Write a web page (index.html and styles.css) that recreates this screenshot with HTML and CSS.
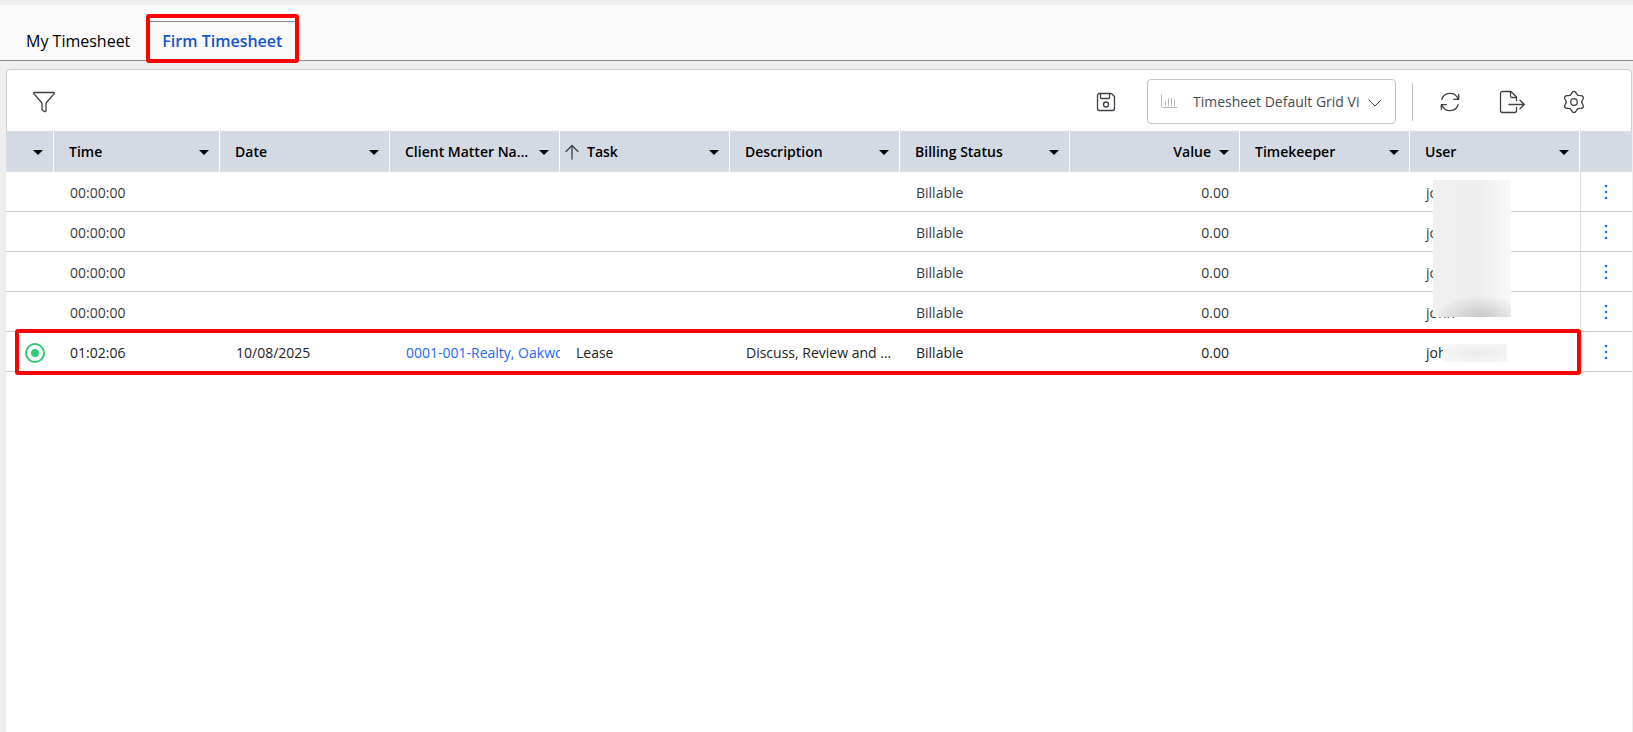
FILE: index.html
```html
<!DOCTYPE html>
<html lang="en">
<head>
    <meta charset="UTF-8">
    <meta name="viewport" content="width=device-width, initial-scale=1.0">
    <title>Firm Timesheet</title>
    <link rel="stylesheet" href="styles.css">
</head>
<body>
    <nav class="tabs">
        <a class="tab" href="#my">My Timesheet</a>
        <a class="tab active" href="#firm">Firm Timesheet</a>
    </nav>

    <main class="panel">
        <div class="toolbar">
            <button class="icon-btn" aria-label="Filter">
                <svg width="24" height="24" viewBox="0 0 24 24"><path d="M2.200 2.500h19.600c.5 0 .6.9.2 1.400L14.500 12.500c-.4.5-.5.8-.5 1.400V20.500c0 1-.9 1.400-1.700.9l-1.700-1.200c-.4-.3-.6-.6-.6-1.100v-5.200c0-.6-.1-.9-.5-1.400L2 3.900c-.4-.5-.3-1.400.2-1.400z"/></svg>
            </button>
            <button class="icon-btn save" aria-label="Save view">
                <svg width="24" height="24" viewBox="0 0 24 24"><path d="M5.500 3.500h11.200c.5 0 .9.200 1.300.5l2 2c.3.4.5.8.5 1.300v11.200a2 2 0 0 1-2 2h-13a2 2 0 0 1-2-2v-13a2 2 0 0 1 2-2zM6.500 3.500v4c0 .6.4 1 1 1h7c.6 0 1-.4 1-1v-4"/><circle cx="12" cy="14.500" r="2.500"/></svg>
            </button>
            <div class="view-select">
                <svg class="chart" width="18" height="16" viewBox="0 0 18 16"><path d="M1.500 1v11.500c0 .6.400 1 1 1H17M5.500 8v3.500M8.500 5v6.500M11.500 4v7.500M14.500 6v5.500"/></svg>
                <select aria-label="Grid view">
                    <option>Timesheet Default Grid View</option>
                </select>
                <svg class="chevron" width="14" height="8" viewBox="0 0 14 8"><path d="M1 1l6 6 6-6"/></svg>
            </div>
            <div class="actions">
                <button class="icon-btn" aria-label="Refresh">
                    <svg width="24" height="24" viewBox="0 0 24 24"><path d="M3.800 9.500A8.600 8.600 0 0 1 20 8.800M20.200 14.500A8.600 8.600 0 0 1 4 15.200M20.700 4.500v4.800h-5M3.300 19.500v-4.800h5"/></svg>
                </button>
                <button class="icon-btn" aria-label="Export">
                    <svg width="26" height="24" viewBox="0 0 26 24"><path d="M17.500 10.500V7L12 1.500H3.500a2 2 0 0 0-2 2v17a2 2 0 0 0 2 2h12a2 2 0 0 0 2-2v-3M11.500 1.500v4.500c0 .8.700 1.500 1.500 1.500h4.500M10 14.500h15M21 10.200l4.300 4.300-4.300 4.300"/></svg>
                </button>
                <button class="icon-btn" aria-label="Settings">
                    <svg width="24" height="24" viewBox="0 0 24 24">
                        <circle cx="12" cy="12" r="3.300"/>
                        <path id="tooth" d="M8.100 5.250C9.800 4.300 9.700 1.400 12 1.400S14.200 4.300 15.900 5.250"/>
                        <use href="#tooth" transform="rotate(60 12 12)"/>
                        <use href="#tooth" transform="rotate(120 12 12)"/>
                        <use href="#tooth" transform="rotate(180 12 12)"/>
                        <use href="#tooth" transform="rotate(240 12 12)"/>
                        <use href="#tooth" transform="rotate(300 12 12)"/>
                    </svg>
                </button>
            </div>
        </div>

        <table class="grid">
            <colgroup>
                <col class="col-state">
                <col class="col-time">
                <col span="8" class="col-data">
                <col class="col-menu">
            </colgroup>
            <thead>
                <tr>
                    <th><div class="head"><button class="caret" aria-label="Status menu"></button></div></th>
                    <th><div class="head"><span>Time</span><button class="caret" aria-label="Time menu"></button></div></th>
                    <th><div class="head"><span>Date</span><button class="caret" aria-label="Date menu"></button></div></th>
                    <th><div class="head"><span>Client Matter Name</span><button class="caret" aria-label="Client matter menu"></button></div></th>
                    <th>
                        <div class="head sorted">
                            <svg width="14" height="16" viewBox="0 0 14 16"><path d="M7 15V1.500M1 7.500l6-6 6 6"/></svg>
                            <span>Task</span><button class="caret" aria-label="Task menu"></button>
                        </div>
                    </th>
                    <th><div class="head"><span>Description</span><button class="caret" aria-label="Description menu"></button></div></th>
                    <th><div class="head"><span>Billing Status</span><button class="caret" aria-label="Billing status menu"></button></div></th>
                    <th><div class="head number"><span>Value</span><button class="caret" aria-label="Value menu"></button></div></th>
                    <th><div class="head"><span>Timekeeper</span><button class="caret" aria-label="Timekeeper menu"></button></div></th>
                    <th><div class="head"><span>User</span><button class="caret" aria-label="User menu"></button></div></th>
                    <th></th>
                </tr>
            </thead>
            <tbody>
                <tr>
                    <td></td><td>00:00:00</td><td></td><td></td><td></td><td></td>
                    <td>Billable</td><td class="number">0.00</td><td></td>
                    <td class="user">john<span class="mask tall"></span></td>
                    <td class="menu"><button class="dots" aria-label="Row menu"><svg width="4" height="16" viewBox="0 0 4 16"><circle cx="2" cy="2" r="1.300"/><circle cx="2" cy="8" r="1.300"/><circle cx="2" cy="14" r="1.300"/></svg></button></td>
                </tr>
                <tr>
                    <td></td><td>00:00:00</td><td></td><td></td><td></td><td></td>
                    <td>Billable</td><td class="number">0.00</td><td></td>
                    <td>john</td>
                    <td class="menu"><button class="dots" aria-label="Row menu"><svg width="4" height="16" viewBox="0 0 4 16"><circle cx="2" cy="2" r="1.300"/><circle cx="2" cy="8" r="1.300"/><circle cx="2" cy="14" r="1.300"/></svg></button></td>
                </tr>
                <tr>
                    <td></td><td>00:00:00</td><td></td><td></td><td></td><td></td>
                    <td>Billable</td><td class="number">0.00</td><td></td>
                    <td>john</td>
                    <td class="menu"><button class="dots" aria-label="Row menu"><svg width="4" height="16" viewBox="0 0 4 16"><circle cx="2" cy="2" r="1.300"/><circle cx="2" cy="8" r="1.300"/><circle cx="2" cy="14" r="1.300"/></svg></button></td>
                </tr>
                <tr>
                    <td></td><td>00:00:00</td><td></td><td></td><td></td><td></td>
                    <td>Billable</td><td class="number">0.00</td><td></td>
                    <td>john</td>
                    <td class="menu"><button class="dots" aria-label="Row menu"><svg width="4" height="16" viewBox="0 0 4 16"><circle cx="2" cy="2" r="1.300"/><circle cx="2" cy="8" r="1.300"/><circle cx="2" cy="14" r="1.300"/></svg></button></td>
                </tr>
                <tr class="running">
                    <td class="state"><svg width="20" height="20" viewBox="0 0 20 20"><circle class="ring" cx="10" cy="10" r="9"/><circle class="dot" cx="10" cy="10" r="4"/></svg></td>
                    <td>01:02:06</td><td>10/08/2025</td>
                    <td class="matter"><a href="#matter">0001-001-Realty, Oakwood</a></td>
                    <td>Lease</td>
                    <td class="description">Discuss, Review and Edit</td>
                    <td>Billable</td><td class="number">0.00</td><td></td>
                    <td class="user">john<span class="mask"></span></td>
                    <td class="menu"><button class="dots" aria-label="Row menu"><svg width="4" height="16" viewBox="0 0 4 16"><circle cx="2" cy="2" r="1.300"/><circle cx="2" cy="8" r="1.300"/><circle cx="2" cy="14" r="1.300"/></svg></button></td>
                </tr>
            </tbody>
        </table>
    </main>
</body>
</html>
```

FILE: styles.css
```css
* {
    box-sizing: border-box;
}

body {
    margin: 0;
    min-height: 100vh;
    display: flex;
    flex-direction: column;
    background: #eeeeee;
    color: #3a3a3a;
    font-family: "Open Sans", "Noto Sans", sans-serif;
    font-size: 14px;
    line-height: 20px;
}

button {
    padding: 0;
    border: none;
    background: none;
    cursor: pointer;
}

svg {
    display: block;
    fill: none;
    stroke: #3f3f46;
    stroke-width: 1.3;
    stroke-linecap: round;
    stroke-linejoin: round;
}

/* tabs */
.tabs {
    display: flex;
    margin-top: 5px;
    padding: 16px 10px 0;
    background: #fafafa;
    border-bottom: 1px solid #8c8c8c;
}

.tab {
    position: relative;
    padding: 9px 16px;
    border-top: 1px solid transparent;
    color: #000000;
    font-size: 16px;
    text-decoration: none;
}

.tab.active {
    border-top-color: #8c8c8c;
    color: #1554c7;
    font-weight: 600;
}

.tab.active::after {
    content: "";
    position: absolute;
    inset: -8px -1px -3px 0;
    border: 4px solid #ff0000;
    border-radius: 3px;
}

/* toolbar */
.panel {
    flex: 1;
    margin: 8px 1px 0 6px;
    background: #ffffff;
    border-radius: 5px 5px 0 0;
}

.toolbar {
    display: flex;
    align-items: center;
    height: 62px;
    padding: 2px 44px 0 24px;
    border: 1px solid #cccccc;
    border-bottom: none;
    border-radius: 5px 5px 0 0;
}

.icon-btn {
    display: flex;
    justify-content: center;
    width: 26px;
}

.save {
    margin-left: auto;
}

.view-select {
    position: relative;
    width: 249px;
    margin-left: 28px;
}

.view-select select {
    display: block;
    width: 100%;
    height: 45px;
    padding: 0 35px 0 45px;
    appearance: none;
    border: 1px solid #c4c4c4;
    border-radius: 4px;
    background: #ffffff;
    color: #4a4a4a;
    font: inherit;
}

.view-select svg {
    position: absolute;
    pointer-events: none;
}

.chart {
    top: 15px;
    left: 13px;
    stroke: #b8b8b8;
    stroke-width: 1;
}

.chevron {
    top: 20px;
    right: 14px;
    stroke-width: 1;
}

.actions {
    display: flex;
    align-items: center;
    gap: 36px;
    height: 38px;
    margin-left: 16px;
    padding-left: 24px;
    border-left: 1px solid #c4c4c4;
}

/* grid */
.grid {
    width: 100%;
    table-layout: fixed;
    border-collapse: separate;
    border-spacing: 0;
}

.col-state {
    width: 48px;
}

.col-time {
    width: 166px;
}

.col-data {
    width: 170px;
}

.col-menu {
    width: 52px;
}

.grid th {
    height: 41px;
    padding: 2px 0 0;
    background: #d3dae4;
    border-right: 1px solid #ffffff;
    border-bottom: 1px solid #dddddd;
    color: #000000;
    font-weight: 600;
    text-align: left;
}

.grid th:last-child {
    border-right: none;
}

.head {
    display: flex;
    align-items: center;
    gap: 8px;
    padding: 0 10px 0 15px;
}

.head span {
    flex: 1;
    overflow: hidden;
    white-space: nowrap;
    text-overflow: ellipsis;
}

.head.number span {
    text-align: right;
}

.head.sorted {
    padding-left: 5px;
}

.caret {
    flex: none;
    margin-left: auto;
    border: 5px solid transparent;
    border-top-color: #000000;
    border-bottom: none;
}

.grid td {
    height: 40px;
    padding: 2px 0 0 16px;
    border-bottom: 1px solid #cccccc;
    overflow: hidden;
    white-space: nowrap;
}

.grid td.number {
    padding-right: 11px;
    text-align: right;
}

.grid td.description {
    padding-right: 6px;
    text-overflow: ellipsis;
}

.grid td.menu {
    padding: 0 2px 0 0;
    border-left: 1px solid #dddddd;
}

.dots {
    display: block;
    margin: 0 auto;
}

.dots svg {
    fill: #1a6dff;
    stroke: none;
}

.matter a {
    color: #2468f2;
    text-decoration: none;
}

.running {
    position: relative;
    color: #222222;
}

.running::after {
    content: "";
    position: absolute;
    inset: -3px 51px -3px 9px;
    border: 4px solid #ff0000;
    border-radius: 3px;
    pointer-events: none;
}

.grid td.state {
    padding-left: 19px;
}

.ring {
    stroke: #2ecc71;
    stroke-width: 2;
}

.dot {
    fill: #2ecc71;
    stroke: none;
}

.grid td.user {
    position: relative;
    overflow: visible;
}

.mask {
    position: absolute;
    top: 12px;
    left: 33px;
    width: 64px;
    height: 18px;
    background: radial-gradient(ellipse at 55% 50%, #ebebeb, #f6f6f6 75%);
}

.mask.tall {
    top: 8px;
    left: 23px;
    z-index: 1;
    width: 78px;
    height: 137px;
    background:
        radial-gradient(ellipse at 60% 100%, #c8c8c8, rgba(238, 238, 238, 0) 70%) bottom / 100% 22px no-repeat,
        linear-gradient(to right, #f0f0f0, #eeeeee 60%, #f8f8f8);
}
```
